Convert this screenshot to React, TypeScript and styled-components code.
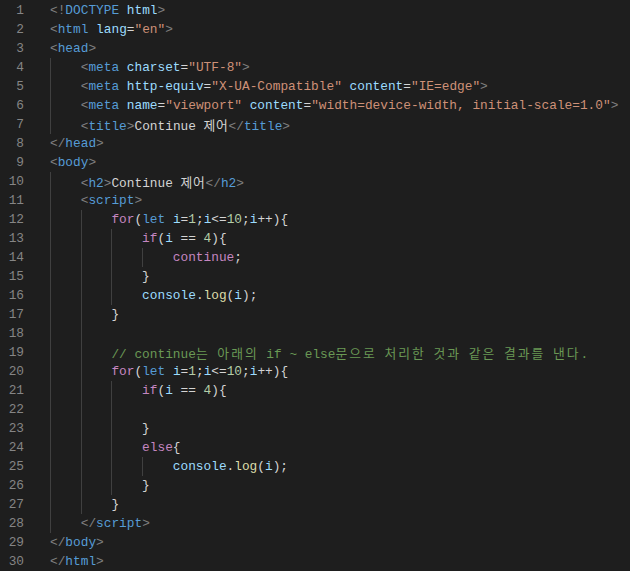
import { createGlobalStyle, styled } from "styled-components";

const GlobalStyle = createGlobalStyle`
  html, body {
    margin: 0;
    padding: 0;
    background: #1e1e1e;
    overflow: hidden;
  }
`;

const Editor = styled.div`
  width: 630px;
  height: 571px;
  background: #1e1e1e;
  padding-top: 1px;
  box-sizing: border-box;
  font-family: "Liberation Mono", "DejaVu Sans Mono", "Noto Sans CJK KR", monospace;
  font-size: 12.8px;
  overflow: hidden;
`;

const Row = styled.div`
  display: flex;
  height: 19px;
  line-height: 19px;
`;

const LineNo = styled.div`
  width: 24px;
  text-align: right;
  color: #858585;
  flex-shrink: 0;
`;

const Code = styled.div`
  margin-left: 26px;
  white-space: pre;
  color: #d4d4d4;
`;

const Guide = styled.span`
  display: inline-block;
  width: 4ch;
  height: 19px;
  vertical-align: top;
  box-shadow: inset 1px 0 0 #404040;
`;

const Kor = styled.span<{ $wide?: boolean }>`
  font-family: "Noto Sans CJK KR", sans-serif;
  letter-spacing: ${(p) => (p.$wide ? "2px" : "0.7px")};
`;

const colors: Record<string, string> = {
  p: "#808080", // tag brackets
  t: "#569cd6", // tag names
  a: "#9cdcfe", // attributes
  s: "#ce9178", // strings
  x: "#d4d4d4", // plain
  k: "#c586c0", // control keywords
  b: "#569cd6", // let
  v: "#9cdcfe", // variables
  n: "#b5cea8", // numbers
  f: "#dcdcaa", // functions
  c: "#6a9955", // comments
};

const Tok = styled.span<{ $kind: string }>`
  color: ${(p) => colors[p.$kind]};
`;

type Token = [string, string];
type Line = { indent: number; tokens: Token[] };

const tag = (name: string, close = false): Token[] => [
  ["p", close ? "</" : "<"],
  ["t", name],
  ["p", ">"],
];

const forLoop: Token[] = [
  ["k", "for"], ["x", "("], ["b", "let"], ["x", " "], ["v", "i"], ["x", "="], ["n", "1"],
  ["x", ";"], ["v", "i"], ["x", "<="], ["n", "10"], ["x", ";"], ["v", "i"], ["x", "++){"],
];
const ifLine: Token[] = [["k", "if"], ["x", "("], ["v", "i"], ["x", " == "], ["n", "4"], ["x", "){"]];
const logLine: Token[] = [["v", "console"], ["x", "."], ["f", "log"], ["x", "("], ["v", "i"], ["x", ");"]];

const lines: Line[] = [
  { indent: 0, tokens: [["p", "<!"], ["t", "DOCTYPE"], ["x", " "], ["a", "html"], ["p", ">"]] },
  { indent: 0, tokens: [["p", "<"], ["t", "html"], ["x", " "], ["a", "lang"], ["x", "="], ["s", '"en"'], ["p", ">"]] },
  { indent: 0, tokens: tag("head") },
  { indent: 1, tokens: [["p", "<"], ["t", "meta"], ["x", " "], ["a", "charset"], ["x", "="], ["s", '"UTF-8"'], ["p", ">"]] },
  {
    indent: 1,
    tokens: [
      ["p", "<"], ["t", "meta"], ["x", " "], ["a", "http-equiv"], ["x", "="], ["s", '"X-UA-Compatible"'],
      ["x", " "], ["a", "content"], ["x", "="], ["s", '"IE=edge"'], ["p", ">"],
    ],
  },
  {
    indent: 1,
    tokens: [
      ["p", "<"], ["t", "meta"], ["x", " "], ["a", "name"], ["x", "="], ["s", '"viewport"'],
      ["x", " "], ["a", "content"], ["x", "="], ["s", '"width=device-width, initial-scale=1.0"'], ["p", ">"],
    ],
  },
  { indent: 1, tokens: [...tag("title"), ["x", "Continue 제어"], ...tag("title", true)] },
  { indent: 0, tokens: tag("head", true) },
  { indent: 0, tokens: tag("body") },
  { indent: 1, tokens: [...tag("h2"), ["x", "Continue 제어"], ...tag("h2", true)] },
  { indent: 1, tokens: tag("script") },
  { indent: 2, tokens: forLoop },
  { indent: 3, tokens: ifLine },
  { indent: 4, tokens: [["k", "continue"], ["x", ";"]] },
  { indent: 3, tokens: [["x", "}"]] },
  { indent: 3, tokens: logLine },
  { indent: 2, tokens: [["x", "}"]] },
  { indent: 2, tokens: [] },
  { indent: 2, tokens: [["c", "// continue는 아래의 if ~ else문으로 처리한 것과 같은 결과를 낸다."]] },
  { indent: 2, tokens: forLoop },
  { indent: 3, tokens: ifLine },
  { indent: 3, tokens: [] },
  { indent: 3, tokens: [["x", "}"]] },
  { indent: 3, tokens: [["k", "else"], ["x", "{"]] },
  { indent: 4, tokens: logLine },
  { indent: 3, tokens: [["x", "}"]] },
  { indent: 2, tokens: [["x", "}"]] },
  { indent: 1, tokens: tag("script", true) },
  { indent: 0, tokens: tag("body", true) },
  { indent: 0, tokens: tag("html", true) },
];

// 한글 부분만 CJK 폰트로 감싸기 (주석 안에서는 글자 간격이 더 넓음)
function renderText(text: string, wide: boolean) {
  return text.split(/([\uac00-\ud7a3]+)/).map((part, i) =>
    /[\uac00-\ud7a3]/.test(part) ? (
      <Kor key={i} $wide={wide}>
        {part}
      </Kor>
    ) : (
      part
    )
  );
}

export default function App() {
  return (
    <>
      <GlobalStyle />
      <Editor>
        {lines.map((line, i) => (
          <Row key={i}>
            <LineNo>{i + 1}</LineNo>
            <Code>
              {Array.from({ length: line.indent }).map((_, g) => (
                <Guide key={g} />
              ))}
              {line.tokens.map(([kind, text], j) => (
                <Tok key={j} $kind={kind}>
                  {renderText(text, kind === "c")}
                </Tok>
              ))}
            </Code>
          </Row>
        ))}
      </Editor>
    </>
  );
}
